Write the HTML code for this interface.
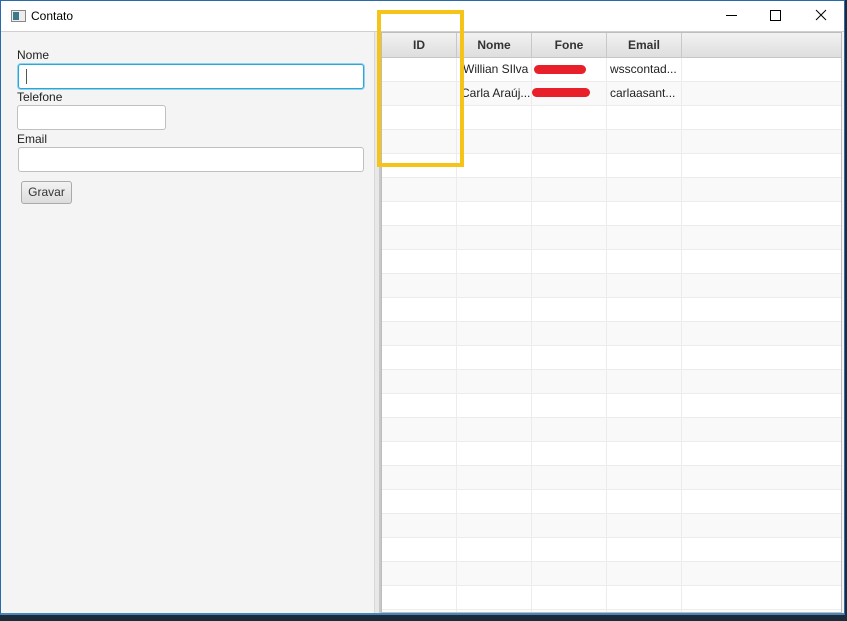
<!DOCTYPE html>
<html><head><style>
*{margin:0;padding:0;box-sizing:border-box}
body{width:847px;height:621px;background:#1c2b3a;position:relative;overflow:hidden;font-family:"Liberation Sans",sans-serif;font-size:12px;color:#333}
.win{position:absolute;left:0;top:0;width:845px;height:615px;background:#f4f4f4;border:1px solid #2a6aa8;border-bottom:2px solid #4a86b8;overflow:hidden}
.title{position:absolute;left:0;top:0;width:843px;height:31px;background:#fff;border-bottom:1px solid #cfcfcf}
.title span{position:absolute;left:30px;top:8px;font-size:12px;color:#000}
.ico{position:absolute;left:10px;top:9px;width:15px;height:12px;border:1px solid #888;background:#eee}
.ico:before{content:"";position:absolute;left:1px;top:1px;width:6px;height:8px;background:#3a7a8a}
.lbl{position:absolute;left:16px;font-size:12px;color:#222}
.tf{position:absolute;background:#fff;border:1px solid #c0c0c0;border-radius:3px}
.btn{position:absolute;left:20px;top:180px;width:51px;height:23px;border:1px solid #aaa;border-radius:3px;background:linear-gradient(#f3f3f3,#dcdcdc);font-size:12px;text-align:center;line-height:21px;color:#333}
.div{position:absolute;left:373px;top:31px;width:7px;height:582px;background:#e8e8e8;border-left:1px solid #d8d8d8;border-right:2px solid #c8c8c8}
.tbl{position:absolute;left:380px;top:31px;width:461px;height:581px;background:#fff;border:1px solid #bdbdbd;overflow:hidden}
.hdr{position:absolute;left:0;top:0;width:100%;height:25px;background:linear-gradient(#f2f2f2,#dedede);border-bottom:1px solid #c6c6c6}
.hc{position:absolute;top:0;height:25px;border-right:1px solid #c8c8c8;text-align:center;font-weight:bold;line-height:25px;font-size:12px;color:#333}
.row{position:absolute;left:0;width:100%;height:24px;border-bottom:1px solid #ececec}
.vl{position:absolute;top:25px;bottom:0;width:1px;background:#ececec}
.cell{position:absolute;font-size:12px;color:#222;line-height:24px}
.red{position:absolute;height:9px;background:#e8202a;border-radius:5px}
.yb{position:absolute;left:377px;top:10px;width:87px;height:157px;border:4px solid #f6c419}
</style></head><body>
<div class="win">
<div class="title"><div class="ico"></div><span>Contato</span>
<svg style="position:absolute;left:720px;top:7px" width="110" height="16"><line x1="5" y1="7.5" x2="16" y2="7.5" stroke="#000"/><rect x="49.5" y="2.5" width="10" height="10" fill="none" stroke="#000"/><path d="M95 2L105 12M105 2L95 12" stroke="#000"/></svg>
</div>
<div class="lbl" style="top:47px">Nome</div>
<div class="tf" style="left:17px;top:63px;width:346px;height:25px;border:1px solid #2ba6d8;box-shadow:0 0 0 1px #8fd3ee"><div style="position:absolute;left:7px;top:4px;width:1px;height:15px;background:#555"></div></div>
<div class="lbl" style="top:89px">Telefone</div>
<div class="tf" style="left:16px;top:104px;width:149px;height:25px"></div>
<div class="lbl" style="top:131px">Email</div>
<div class="tf" style="left:17px;top:146px;width:346px;height:25px"></div>
<div class="btn">Gravar</div>
<div class="div"></div>
<div class="tbl">
<div class="hdr">
<div class="hc" style="left:0;width:75px">ID</div>
<div class="hc" style="left:75px;width:75px">Nome</div>
<div class="hc" style="left:150px;width:75px">Fone</div>
<div class="hc" style="left:225px;width:75px">Email</div>
</div>
<div id="rows"></div>
<div class="vl" style="left:74px"></div><div class="vl" style="left:149px"></div><div class="vl" style="left:224px"></div><div class="vl" style="left:299px"></div>
<div class="cell" style="left:81px;top:24px">Willian SIlva</div>
<div class="cell" style="left:79px;top:48px">Carla Araúj...</div>
<div class="cell" style="left:228px;top:24px">wsscontad...</div>
<div class="cell" style="left:228px;top:48px">carlaasant...</div>
<div class="red" style="left:152px;top:32px;width:52px"></div>
<div class="red" style="left:150px;top:55px;width:58px"></div>
</div>
</div>
<div class="yb"></div>
<script>
var h='';for(var i=0;i<23;i++){h+='<div class="row" style="top:'+(25+i*24)+'px;background:'+(i%2?'#f9f9f9':'#fff')+'"></div>'}
document.getElementById('rows').innerHTML=h;
</script>
</body></html>
